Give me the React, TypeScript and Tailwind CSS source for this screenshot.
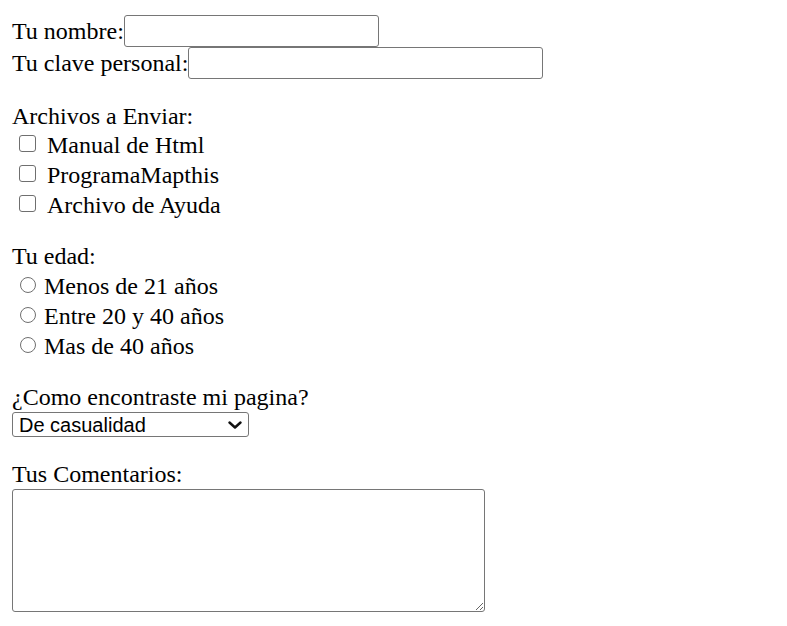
import React from "react";

const archivos = ["Manual de Html", "ProgramaMapthis", "Archivo de Ayuda"];
const edades = ["Menos de 21 años", "Entre 20 y 40 años", "Mas de 40 años"];

const App: React.FC = () => {
  return (
    <div
      className="min-h-[626px] bg-white pl-[12px] pt-[15px] text-[24px] text-black"
      style={{ fontFamily: '"Liberation Serif", "Times New Roman", serif' }}
    >
      <form>
        <div className="flex h-[32px] items-center">
          <span className="leading-[28px]">Tu nombre:</span>
          <input
            type="text"
            className="h-[32px] w-[255px] rounded-[3px] border-[1.5px] border-[#767676] bg-white"
          />
        </div>
        <div className="flex h-[32px] items-center">
          <span className="leading-[28px]">Tu clave personal:</span>
          <input
            type="password"
            className="h-[32px] w-[355px] rounded-[3px] border-[1.5px] border-[#767676] bg-white"
          />
        </div>

        <div className="mt-[22.5px] h-[28px] leading-[28px]">Archivos a Enviar:</div>
        {archivos.map((a) => (
          <label key={a} className="flex h-[30px] items-center">
            <span className="ml-[7px] mt-[-2px] box-border block h-[17px] w-[17px] shrink-0 rounded-[3px] border-[1.5px] border-[#6f6f6f] bg-white" />
            <span className="ml-[11px] mt-[1px] leading-[28px]">{a}</span>
          </label>
        ))}

        <div className="mt-[22.5px] h-[28px] leading-[28px]">Tu edad:</div>
        {edades.map((e) => (
          <label key={e} className="flex h-[30px] items-center">
            <span className="ml-[8px] mt-[-1px] box-border block h-[16px] w-[16px] shrink-0 rounded-full border-[1.5px] border-[#6f6f6f] bg-white" />
            <span className="ml-[8px] mt-[1px] leading-[28px]">{e}</span>
          </label>
        ))}

        <div className="mt-[22.5px] h-[28px] leading-[28px]">¿Como encontraste mi pagina?</div>
        <div
          className="mt-[1.5px] flex h-[25px] w-[237px] items-center justify-between rounded-[3px] border-[1.5px] border-[#767676] bg-white pl-[6px] pr-[6px] text-[20px] leading-[22px]"
          style={{ fontFamily: '"Liberation Sans", Arial, sans-serif' }}
        >
          <span>De casualidad</span>
          <svg width="14" height="8" viewBox="0 0 14 8" fill="none">
            <path d="M1.5 1.5 L7 6.5 L12.5 1.5" stroke="#111" strokeWidth="2.4" strokeLinecap="round" strokeLinejoin="round" />
          </svg>
        </div>

        <div className="mt-[23px] h-[28px] leading-[28px]">Tus Comentarios:</div>
        <textarea className="mt-[1px] block h-[123px] w-[473px] rounded-[3px] border-[1.5px] border-[#767676] bg-white" />
      </form>
    </div>
  );
};

export default App;
